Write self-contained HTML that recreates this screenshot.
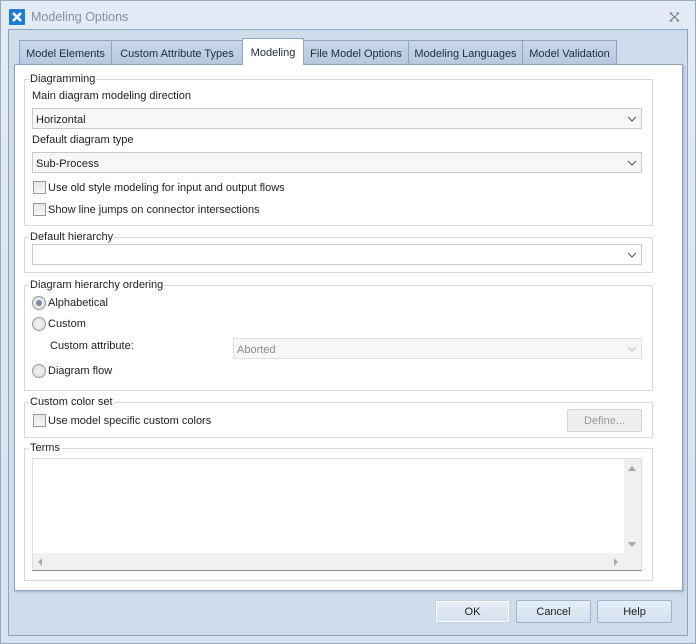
<!DOCTYPE html>
<html><head><style>
*{box-sizing:border-box;margin:0;padding:0}
body{width:696px;height:644px;font-family:"Liberation Sans",sans-serif;font-size:11px;color:#1e1e1e;position:relative;overflow:hidden;background:#dfe8f4}
.a{position:absolute}
.win{left:0;top:0;width:696px;height:644px;border:1px solid #9aaabd;background:linear-gradient(#e2ebf6,#d6e2f0)}
.client{left:8px;top:29px;width:680px;height:607px;border:1px solid #8fa4c0;background:#cfdcec}
.tab{top:40px;height:25px;border:1px solid #8fa4c0;border-bottom:none;background:linear-gradient(#c9d8ea,#b4c8df);padding:7px 0 0;text-align:center;color:#1e2a3a}
.tab.on{top:38px;height:27px;background:#fff;border-color:#8fa4c0;z-index:2;padding-top:8px}
.panel{left:14px;top:64px;width:669px;height:527px;background:#fff;border:1px solid #8fa4c0;box-shadow:1px 1px 2px #9fb0c6}
.grp{border:1px solid #d9d9d9}
.gl{background:#fff;padding:0 1px}
.combo{height:21px;border:1px solid #c9c9c9;background:#f7f7f7;padding:5px 0 0 3px}
.combo svg{position:absolute;right:4px;top:7px}
.cb{width:13px;height:13px;border:1px solid #9a9a9a;background:linear-gradient(#e8e8e8,#f7f7f7)}
.rb{width:14px;height:14px;border:1px solid #9a9a9a;border-radius:50%;background:radial-gradient(#f4f4f4,#dcdcdc)}
.btn{height:23px;border:1px solid #9fb3cd;border-radius:2px;background:linear-gradient(#e6eef8,#d4e1f0);text-align:center;padding-top:5px}
</style></head><body>
<div class="a win"></div>
<div class="a" style="left:9px;top:9px;width:16px;height:16px;background:#1c7cd5;border-radius:1px"><svg width="16" height="16"><path d="M4 4L12 12M12 4L4 12" stroke="#fff" stroke-width="2.6"/></svg></div>
<div class="a" style="left:31px;top:10px;font-size:12.5px;color:#8090a8">Modeling Options</div>
<svg class="a" style="left:669px;top:12px" width="11" height="10"><path d="M1 1L10 9M10 1L1 9M1 1h2.5M7.5 1h2.5M1 9h2.5M7.5 9h2.5" stroke="#555" stroke-width="0.8" fill="none"/></svg>
<div class="a client"></div>
<div class="a tab" style="left:19px;width:93px">Model Elements</div>
<div class="a tab" style="left:111px;width:132px">Custom Attribute Types</div>
<div class="a tab on" style="left:242px;width:62px">Modeling</div>
<div class="a tab" style="left:303px;width:106px">File Model Options</div>
<div class="a tab" style="left:408px;width:115px">Modeling Languages</div>
<div class="a tab" style="left:522px;width:95px">Model Validation</div>
<div class="a panel"></div>

<div class="a grp" style="left:24px;top:79px;width:629px;height:147px"></div>
<div class="a gl" style="left:29px;top:73px">Diagramming</div>
<div class="a" style="left:32px;top:90px">Main diagram modeling direction</div>
<div class="a combo" style="left:32px;top:108px;width:610px">Horizontal<svg width="10" height="6"><path d="M1 1l4 4 4-4" stroke="#555" fill="none"/></svg></div>
<div class="a" style="left:32px;top:134px">Default diagram type</div>
<div class="a combo" style="left:32px;top:152px;width:610px">Sub-Process<svg width="10" height="6"><path d="M1 1l4 4 4-4" stroke="#555" fill="none"/></svg></div>
<div class="a cb" style="left:33px;top:181px"></div><div class="a" style="left:48px;top:182px">Use old style modeling for input and output flows</div>
<div class="a cb" style="left:33px;top:203px"></div><div class="a" style="left:48px;top:204px">Show line jumps on connector intersections</div>

<div class="a grp" style="left:24px;top:237px;width:629px;height:36px"></div>
<div class="a gl" style="left:29px;top:231px">Default hierarchy</div>
<div class="a combo" style="left:32px;top:244px;width:610px;background:#fff"><svg width="10" height="6"><path d="M1 1l4 4 4-4" stroke="#555" fill="none"/></svg></div>

<div class="a grp" style="left:24px;top:285px;width:629px;height:106px"></div>
<div class="a gl" style="left:29px;top:279px">Diagram hierarchy ordering</div>
<div class="a rb" style="left:32px;top:296px"><div class="a" style="left:3px;top:3px;width:6px;height:6px;border-radius:50%;background:#7a8da6"></div></div><div class="a" style="left:48px;top:297px">Alphabetical</div>
<div class="a rb" style="left:32px;top:317px"></div><div class="a" style="left:48px;top:318px">Custom</div>
<div class="a" style="left:50px;top:340px">Custom attribute:</div>
<div class="a combo" style="left:233px;top:338px;width:409px;color:#8a8a8a;border-color:#e0e0e0">Aborted<svg width="10" height="6"><path d="M1 1l4 4 4-4" stroke="#bbb" fill="none"/></svg></div>
<div class="a rb" style="left:32px;top:364px"></div><div class="a" style="left:48px;top:365px">Diagram flow</div>

<div class="a grp" style="left:24px;top:402px;width:629px;height:36px"></div>
<div class="a gl" style="left:29px;top:396px">Custom color set</div>
<div class="a cb" style="left:33px;top:414px"></div><div class="a" style="left:48px;top:415px">Use model specific custom colors</div>
<div class="a btn" style="left:567px;top:409px;width:75px;color:#999;border-color:#d5d5d5;background:#efefef">Define...</div>

<div class="a grp" style="left:24px;top:448px;width:629px;height:133px"></div>
<div class="a gl" style="left:29px;top:442px">Terms</div>
<div class="a" style="left:32px;top:458px;width:610px;height:113px;border:1px solid #dcdcdc;border-bottom-color:#888;background:#f0f0f0"></div>
<div class="a" style="left:33px;top:459px;width:591px;height:94px;background:#fff"></div>
<svg class="a" style="left:627px;top:464px" width="10" height="90"><path d="M1 7L5 2 9 7Z M1 78L5 83 9 78Z" fill="#a8a8a8"/></svg>
<svg class="a" style="left:36px;top:556px" width="590" height="12"><path d="M6 2L2 6 6 10Z M578 2L582 6 578 10Z" fill="#a8a8a8"/></svg>

<div class="a btn" style="left:435px;top:600px;width:75px;border-color:#c5d3e4;box-shadow:inset 0 0 0 1px #fff">OK</div>
<div class="a btn" style="left:516px;top:600px;width:75px">Cancel</div>
<div class="a btn" style="left:597px;top:600px;width:75px">Help</div>
</body></html>
